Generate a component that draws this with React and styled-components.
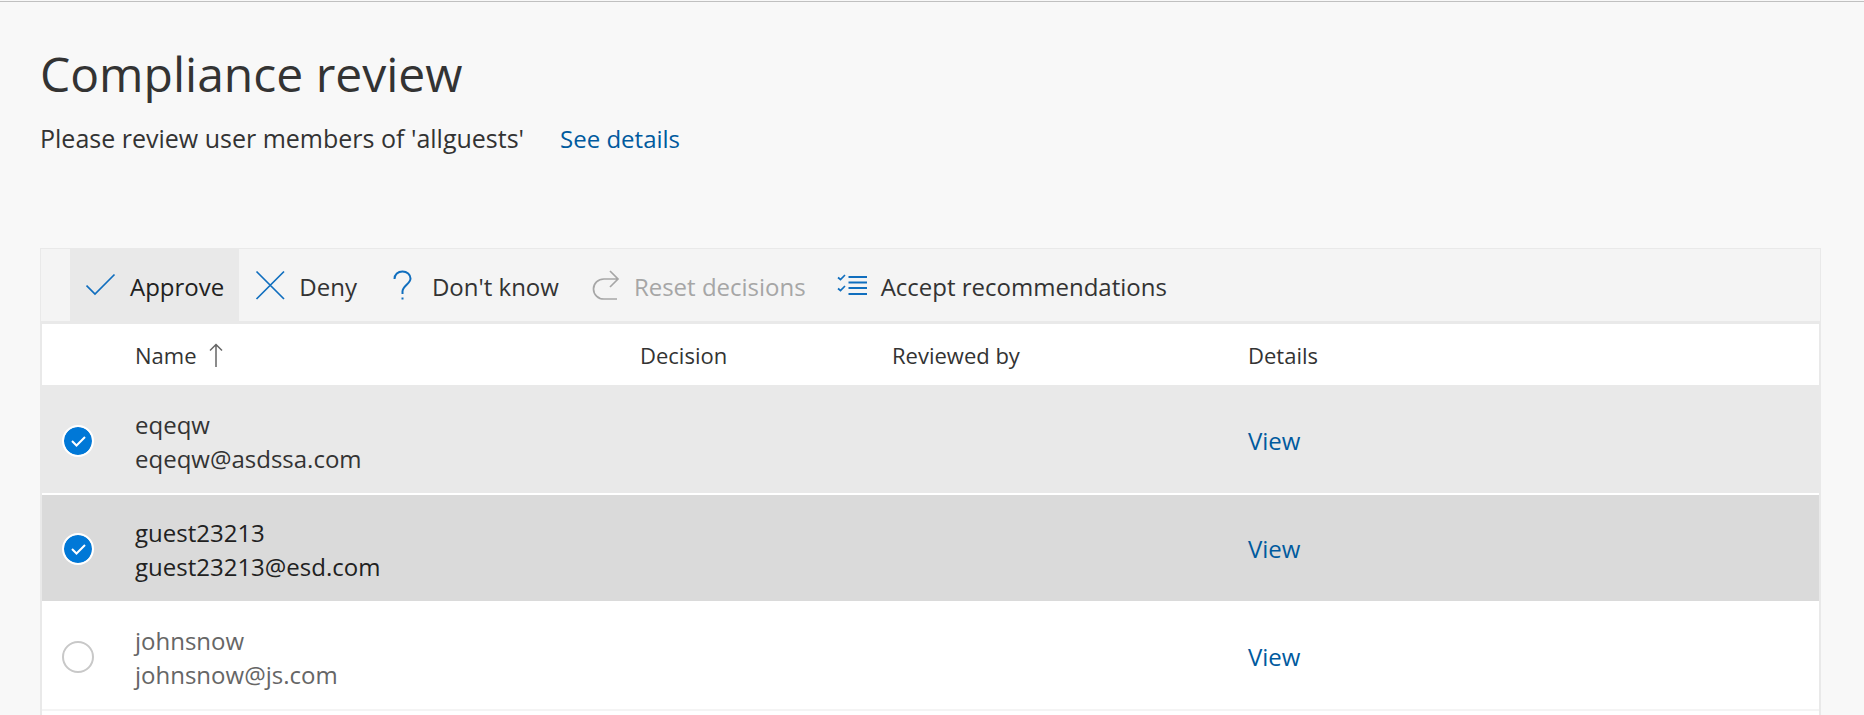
import React, { useState } from "react";
import styled, { createGlobalStyle } from "styled-components";

const GlobalStyle = createGlobalStyle`
  *, *::before, *::after { box-sizing: border-box; }
  body {
    margin: 0;
    background: #f8f8f8;
    color: #333;
    font-family: "Segoe UI", "Open Sans", "Noto Sans", sans-serif;
    font-size: 24px;
    line-height: 34px;
  }
`;

const Page = styled.div`
  display: flex;
  flex-direction: column;
  min-height: 100vh;
  padding-top: 1px;
`;

const TopRule = styled.div`
  height: 1px;
  flex: none;
  background: #c0c0c0;
`;

const Header = styled.header`
  padding: 42px 40px 92px;
`;

const Title = styled.h1`
  margin: 0 0 17px;
  font-size: 48px;
  font-weight: 400;
  line-height: 60px;
`;

const Subtitle = styled.div`
  display: flex;
  flex-wrap: wrap;
  align-items: baseline;
  gap: 0 36px;
`;

const Description = styled.p`
  margin: 0;
  font-size: 25px;
`;

const Link = styled.a`
  color: #005a9e;
  text-decoration: none;
  &:hover { text-decoration: underline; }
`;

const Main = styled.main`
  display: flex;
  flex-direction: column;
  flex: 1;
  margin: 0 43px 0 40px;
`;

const Toolbar = styled.div`
  display: flex;
  flex-wrap: wrap;
  padding-left: 29px;
  background: #f4f4f4;
  border: 1px solid #e9e9e9;
  border-bottom-width: 3px;
`;

const Command = styled.button`
  display: flex;
  align-items: center;
  gap: 14px;
  height: 72px;
  padding: 0 15px 0 16px;
  border: 0;
  background: ${(p) => (p.$active ? "#e9e9e9" : "transparent")};
  color: ${(p) => (p.$active ? "#212121" : "#333")};
  font: inherit;
  white-space: nowrap;
  cursor: pointer;
  &:disabled { color: #a6a6a6; cursor: default; }
`;

const CommandLabel = styled.span`
  padding-top: 4px;
`;

const CommandIcon = styled.svg`
  width: 30px;
  height: 30px;
  flex: none;
  fill: none;
  stroke: ${(p) => (p.$muted ? "#a6a6a6" : "#106ebe")};
  stroke-width: 1.7;
`;

const List = styled.section`
  flex: 1;
  background: #fff;
  border: solid #e9e9e9;
  border-width: 0 2px;
`;

const Table = styled.table`
  width: 100%;
  border-collapse: separate;
  border-spacing: 0;
  table-layout: fixed;
`;

const Col = styled.col`
  width: ${(p) => p.$width};
`;

const HeadCell = styled.th`
  height: 63px;
  padding: 0;
  border-bottom: 2px solid #e9e9e9;
  font-size: 22px;
  font-weight: 400;
  text-align: left;
`;

const SortButton = styled.button`
  display: flex;
  align-items: center;
  gap: 12px;
  padding: 0;
  border: 0;
  background: none;
  color: inherit;
  font: inherit;
`;

const SortIcon = styled.svg`
  width: 14px;
  height: 24px;
  fill: none;
  stroke: #666;
  stroke-width: 1.5;
`;

const tones = {
  selected: { background: "#e9e9e9", color: "#333", line: "#fff" },
  hovered: { background: "#dadada", color: "#212121", line: "#fff" },
  plain: { background: "#fff", color: "#666", line: "#f4f4f4" },
};

const Row = styled.tr`
  background: ${(p) => tones[p.$tone].background};
  color: ${(p) => tones[p.$tone].color};
  --line: ${(p) => tones[p.$tone].line};
`;

const Cell = styled.td`
  height: 108px;
  padding: 2px 0 0;
  border-bottom: 2px solid var(--line);
  vertical-align: middle;
`;

const Select = styled.label`
  display: grid;
  width: 32px;
  margin-left: 20px;
`;

const SelectBox = styled.input`
  grid-area: 1 / 1;
  appearance: none;
  width: 32px;
  height: 32px;
  margin: 0;
  border: 2px solid #c8c8c8;
  border-radius: 50%;
  background: #fff;
  &:checked { border-color: #fff; background: #0078d7; background-clip: padding-box; }
`;

const SelectMark = styled.svg`
  grid-area: 1 / 1;
  width: 32px;
  height: 32px;
  fill: none;
  stroke: #fff;
  stroke-width: 2;
  pointer-events: none;
`;

const Person = styled.div`
  display: flex;
  flex-direction: column;
  padding-top: 2px;
`;

const icons = {
  approve: <path d="M0.500 15.500 L9 24 L28.500 4.500" />,
  deny: <path d="M1.500 1.500 L29 29 M29 1.500 L1.500 29" />,
  unknown: (
    <>
      <path strokeWidth="2" d="M6.500 9 C6.500 4.500 10 1.500 14.500 1.500 C19 1.500 22.500 4.500 22.500 8.500 C22.500 14 14.500 15.500 14.500 21.500 V24" />
      <path strokeWidth="2" d="M14.500 27.500 V29.500" />
    </>
  ),
  reset: <path d="M27 29 H14 C8 29 3.500 24.500 3.500 19 C3.500 13.500 8 9 14 9 H28 M20 1 L28 9 L20 17" />,
  accept: (
    <>
      <path strokeWidth="2" d="M11.500 7 H30 M11.500 12.500 H30 M11.500 18 H30 M11.500 24 H30" />
      <path d="M1 7.500 L3.500 9.500 L8 5 M1 18.500 L3.500 20.500 L8 16" />
    </>
  ),
};

const commands = [
  { icon: "approve", label: "Approve", active: true },
  { icon: "deny", label: "Deny" },
  { icon: "unknown", label: "Don't know" },
  { icon: "reset", label: "Reset decisions", disabled: true },
  { icon: "accept", label: "Accept recommendations" },
];

const people = [
  { name: "eqeqw", mail: "eqeqw@asdssa.com", tone: "selected" },
  { name: "guest23213", mail: "guest23213@esd.com", tone: "hovered" },
  { name: "johnsnow", mail: "johnsnow@js.com", tone: "plain" },
];

export default function App() {
  const [picked, setPicked] = useState({ eqeqw: true, guest23213: true });
  const toggle = (name) => setPicked((p) => ({ ...p, [name]: !p[name] }));

  return (
    <Page>
      <GlobalStyle />
      <TopRule />
      <Header>
        <Title>Compliance review</Title>
        <Subtitle>
          <Description>Please review user members of 'allguests'</Description>
          <Link href="#details">See details</Link>
        </Subtitle>
      </Header>
      <Main>
        <Toolbar role="toolbar">
          {commands.map((c) => (
            <Command key={c.label} type="button" $active={c.active} disabled={c.disabled}>
              <CommandIcon viewBox="0 0 30 30" $muted={c.disabled} aria-hidden="true">
                {icons[c.icon]}
              </CommandIcon>
              <CommandLabel>{c.label}</CommandLabel>
            </Command>
          ))}
        </Toolbar>
        <List>
          <Table>
            <colgroup>
              <Col $width="93px" />
              <Col $width="505px" />
              <Col $width="252px" />
              <Col $width="356px" />
              <Col $width="auto" />
            </colgroup>
            <thead>
              <tr>
                <HeadCell />
                <HeadCell scope="col" aria-sort="ascending">
                  <SortButton type="button">
                    Name
                    <SortIcon viewBox="0 0 14 24" aria-hidden="true">
                      <path d="M7 24 V1.500 M1 7.500 L7 1.500 L13 7.500" />
                    </SortIcon>
                  </SortButton>
                </HeadCell>
                <HeadCell scope="col">Decision</HeadCell>
                <HeadCell scope="col">Reviewed by</HeadCell>
                <HeadCell scope="col">Details</HeadCell>
              </tr>
            </thead>
            <tbody>
              {people.map((p) => (
                <Row key={p.name} $tone={p.tone}>
                  <Cell>
                    <Select>
                      <SelectBox
                        type="checkbox"
                        aria-label={p.name}
                        checked={Boolean(picked[p.name])}
                        onChange={() => toggle(p.name)}
                      />
                      {picked[p.name] && (
                        <SelectMark viewBox="0 0 32 32" aria-hidden="true">
                          <path d="M10 16 L14.500 20.500 L23 12" />
                        </SelectMark>
                      )}
                    </Select>
                  </Cell>
                  <Cell>
                    <Person>
                      <span>{p.name}</span>
                      <span>{p.mail}</span>
                    </Person>
                  </Cell>
                  <Cell />
                  <Cell />
                  <Cell>
                    <Link href={"#" + p.name}>View</Link>
                  </Cell>
                </Row>
              ))}
            </tbody>
          </Table>
        </List>
      </Main>
    </Page>
  );
}
